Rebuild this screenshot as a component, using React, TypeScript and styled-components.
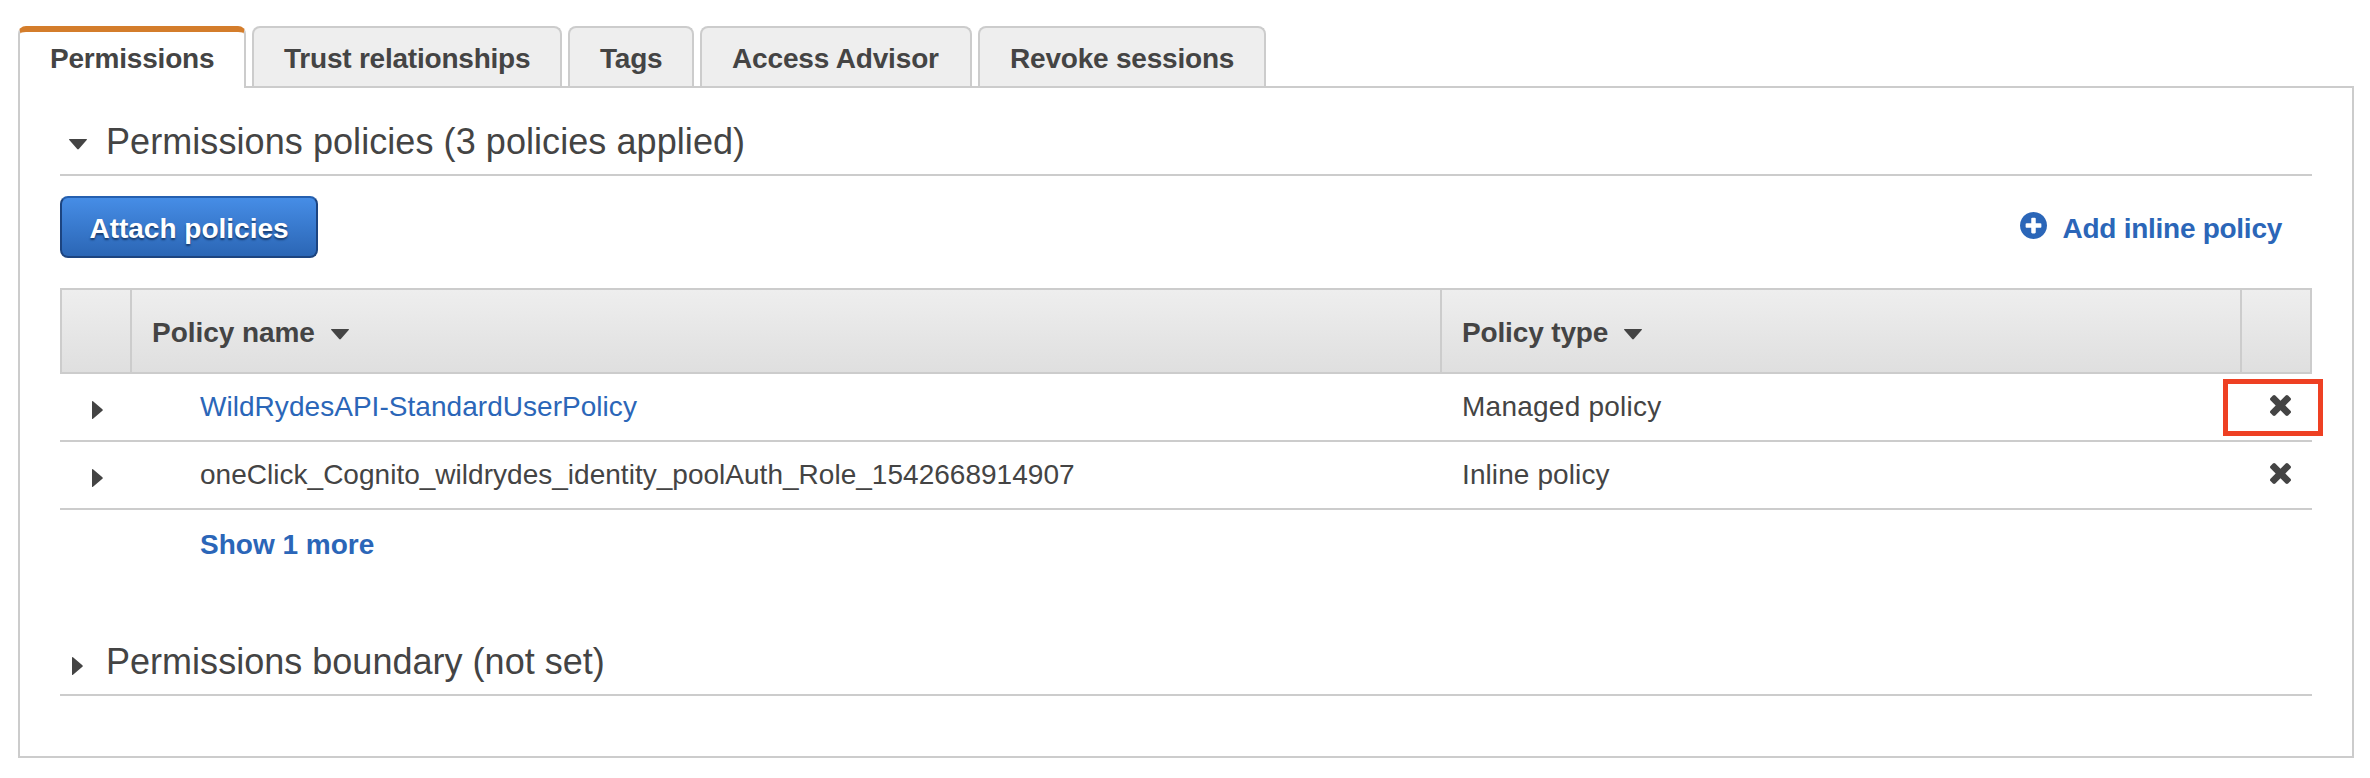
import React from "react";
import styled, { createGlobalStyle } from "styled-components";

const line = "#cccccc";
const ink = "#444444";
const link = "#2b66b8";

const GlobalStyle = createGlobalStyle`
  *, *::before, *::after { box-sizing: border-box; }
  html, body { margin: 0; padding: 0; background: #fff; }
  body {
    font-family: "Liberation Sans", Arial, sans-serif;
    font-size: 28px;
    line-height: 32px;
    color: ${ink};
    overflow: hidden;
  }
`;

const Page = styled.main`
  height: 778px;
  padding: 26px 16px 20px 18px;
`;

const TabBar = styled.nav`
  display: flex;
  gap: 6px;
  height: 62px;
  margin-bottom: -2px;
  position: relative;
`;

const Tab = styled.button<{ $active?: boolean; $width: number; $track: number }>`
  width: ${(p) => p.$width}px;
  height: ${(p) => (p.$active ? 62 : 60)}px;
  padding: ${(p) => (p.$active ? "11px" : "15px")} 0 0 30px;
  display: flex;
  align-items: flex-start;
  border: 2px solid ${line};
  border-top: ${(p) => (p.$active ? "6px solid #d47d2b" : `2px solid ${line}`)};
  border-bottom: 0;
  border-radius: 8px 8px 0 0;
  background: ${(p) => (p.$active ? "#fff" : "#eeeeee")};
  color: ${ink};
  font: bold 28px/32px "Liberation Sans", Arial, sans-serif;
  letter-spacing: ${(p) => p.$track}px;
  white-space: nowrap;
`;

const Panel = styled.section`
  height: 672px;
  border: 2px solid ${line};
  padding: 0 40px;
`;

const SectionHeading = styled.h2`
  display: flex;
  align-items: center;
  height: 88px;
  margin: 0;
  padding: 22px 0 0 9px;
  border-bottom: 2px solid ${line};
  font-size: 36px;
  line-height: 42px;
  font-weight: normal;
`;

const HeadingIcon = styled.span<{ $collapsed?: boolean }>`
  display: flex;
  width: 37px;
  padding: ${(p) => (p.$collapsed ? "8px 0 0 3px" : "4px 0 0")};
`;

const HeadingText = styled.span<{ $track: number }>`
  letter-spacing: ${(p) => p.$track}px;
`;

const Toolbar = styled.div`
  display: flex;
  justify-content: space-between;
  align-items: flex-start;
  height: 112px;
  padding: 20px 30px 0 0;
`;

const PrimaryButton = styled.button`
  width: 258px;
  height: 62px;
  padding: 4px 0 0;
  border: 2px solid #1c4480;
  border-top-color: #2560b0;
  border-radius: 8px;
  background: linear-gradient(#468de6, #2b66b5);
  color: #fff;
  font: bold 28px/32px "Liberation Sans", Arial, sans-serif;
  text-shadow: 0 2px 2px #173b6d;
  white-space: nowrap;
`;

const InlineLink = styled.a`
  display: flex;
  align-items: flex-start;
  gap: 16px;
  padding-top: 16px;
  color: ${link};
  font-weight: bold;
  white-space: nowrap;
`;

const LinkText = styled.span`
  padding-top: 1px;
  letter-spacing: -0.27px;
`;

const Table = styled.div`
  display: flex;
  flex-direction: column;
`;

const HeaderRow = styled.div`
  display: grid;
  grid-template-columns: 70px 1310px 800px 70px;
  height: 86px;
  border: 2px solid ${line};
  border-right: 0;
  background: linear-gradient(#eeeeee, #dfdfdf);
`;

const HeaderCell = styled.div<{ $track?: number }>`
  display: flex;
  align-items: center;
  gap: 16px;
  padding: 4px 0 0 20px;
  border-right: 2px solid ${line};
  font-weight: bold;
  letter-spacing: ${(p) => p.$track ?? 0}px;
`;

const SortIcon = styled.span`
  display: flex;
  padding-top: 3px;
`;

const Row = styled.div`
  display: grid;
  grid-template-columns: 72px 1310px 800px 70px;
  height: 68px;
  border-bottom: 2px solid ${line};
`;

const Cell = styled.div<{ $left: number; $track: number; $link?: boolean }>`
  padding: 17px 0 0 ${(p) => p.$left}px;
  color: ${(p) => (p.$link ? link : ink)};
  letter-spacing: ${(p) => p.$track}px;
  white-space: nowrap;
`;

const ExpandCell = styled.div`
  padding: 27px 0 0 32px;
`;

const RemoveCell = styled.div`
  position: relative;
  padding: 21px 0 0 27.5px;
`;

const Highlight = styled.div`
  position: absolute;
  left: -19px;
  top: 5px;
  width: 100px;
  height: 57px;
  border: 5px solid #ee4023;
`;

const ShowMore = styled.a`
  display: block;
  height: 98px;
  padding: 19px 0 0 140px;
  color: ${link};
  font-weight: bold;
`;

const Glyph = styled.svg`
  display: block;
  flex: none;
`;

const CaretDown = () => (
  <Glyph width="18" height="11" viewBox="0 0 18 11" fill={ink}>
    <path d="M.6 0h16.8q1 .2.3 1L9.8 10q-.8.9-1.6 0L.3 1Q-.4.2.6 0Z" />
  </Glyph>
);

const CaretRight = () => (
  <Glyph width="11" height="18" viewBox="0 0 11 18" fill={ink}>
    <path d="M0 .6Q.2-.4 1 .3L10.4 8.2q.8.8 0 1.6L1 17.7q-.8.7-1-.3Z" />
  </Glyph>
);

const RemoveIcon = () => (
  <Glyph width="21" height="21" viewBox="302 366 1188 1188" fill={ink}>
    <path d="M1490 1322q0 40-28 68l-136 136q-28 28-68 28t-68-28l-294-294-294 294q-28 28-68 28t-68-28l-136-136q-28-28-28-68t28-68l294-294-294-294q-28-28-28-68t28-68l136-136q28-28 68-28t68 28l294 294 294-294q28-28 68-28t68 28l136 136q28 28 28 68t-28 68l-294 294 294 294q28 28 28 68z" />
  </Glyph>
);

const PlusCircle = () => (
  <Glyph width="27" height="27" viewBox="128 128 1536 1536" fill={link}>
    <path d="M1344 960v-128q0-26-19-45t-45-19h-256v-256q0-26-19-45t-45-19h-128q-26 0-45 19t-19 45v256h-256q-26 0-45 19t-19 45v128q0 26 19 45t45 19h256v256q0 26 19 45t45 19h128q26 0 45-19t19-45v-256h256q26 0 45-19t19-45zm320-64q0 209-103 385.5t-279.5 279.5-385.5 103-385.5-103-279.5-279.5-103-385.5 103-385.5 279.5-279.5 385.5-103 385.5 103 279.5 279.5 103 385.5z" />
  </Glyph>
);

const tabs = [
  { label: "Permissions", width: 228, track: -0.2, active: true },
  { label: "Trust relationships", width: 310, track: -0.22 },
  { label: "Tags", width: 126, track: -0.2 },
  { label: "Access Advisor", width: 272, track: -0.16 },
  { label: "Revoke sessions", width: 288, track: -0.2 },
];

const policies = [
  {
    name: "WildRydesAPI-StandardUserPolicy",
    nameTrack: 0.04,
    type: "Managed policy",
    typeTrack: 0.24,
    linked: true,
    highlighted: true,
  },
  {
    name: "oneClick_Cognito_wildrydes_identity_poolAuth_Role_1542668914907",
    nameTrack: 0.02,
    type: "Inline policy",
    typeTrack: 0.1,
    linked: false,
    highlighted: false,
  },
];

export default function App() {
  return (
    <>
      <GlobalStyle />
      <Page>
        <TabBar>
          {tabs.map((t) => (
            <Tab key={t.label} $active={t.active} $width={t.width} $track={t.track}>
              {t.label}
            </Tab>
          ))}
        </TabBar>
        <Panel>
          <SectionHeading>
            <HeadingIcon>
              <CaretDown />
            </HeadingIcon>
            <HeadingText $track={0.07}>Permissions policies (3 policies applied)</HeadingText>
          </SectionHeading>
          <Toolbar>
            <PrimaryButton>Attach policies</PrimaryButton>
            <InlineLink>
              <PlusCircle />
              <LinkText>Add inline policy</LinkText>
            </InlineLink>
          </Toolbar>
          <Table>
            <HeaderRow>
              <HeaderCell />
              <HeaderCell $track={-0.05}>
                Policy name
                <SortIcon>
                  <CaretDown />
                </SortIcon>
              </HeaderCell>
              <HeaderCell $track={-0.15}>
                Policy type
                <SortIcon>
                  <CaretDown />
                </SortIcon>
              </HeaderCell>
              <HeaderCell />
            </HeaderRow>
            {policies.map((p) => (
              <Row key={p.name}>
                <ExpandCell>
                  <CaretRight />
                </ExpandCell>
                <Cell $left={68} $link={p.linked} $track={p.nameTrack}>
                  {p.name}
                </Cell>
                <Cell $left={20} $track={p.typeTrack}>
                  {p.type}
                </Cell>
                <RemoveCell>
                  <RemoveIcon />
                  {p.highlighted && <Highlight />}
                </RemoveCell>
              </Row>
            ))}
          </Table>
          <ShowMore>Show 1 more</ShowMore>
          <SectionHeading>
            <HeadingIcon $collapsed>
              <CaretRight />
            </HeadingIcon>
            <HeadingText $track={0.02}>Permissions boundary (not set)</HeadingText>
          </SectionHeading>
        </Panel>
      </Page>
    </>
  );
}
